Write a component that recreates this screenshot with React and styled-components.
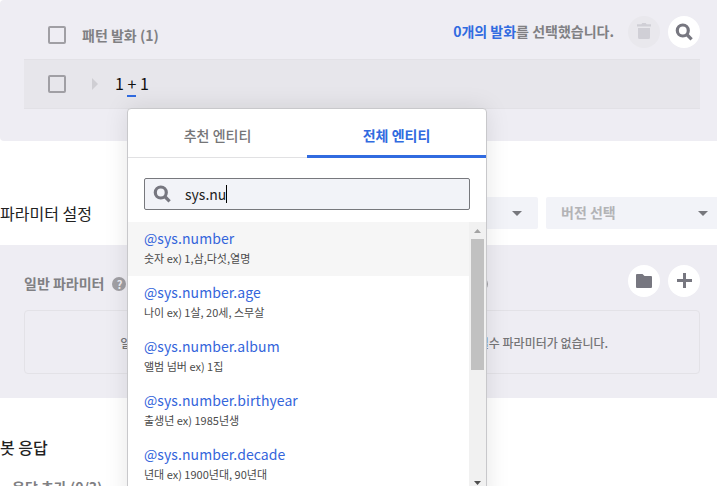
import React from "react";
import styled, { createGlobalStyle } from "styled-components";

const Global = createGlobalStyle`
  * { box-sizing: border-box; }
  body { margin: 0; background: #fff; }
  body, button, input { font-family: "Noto Sans CJK KR", "Noto Sans", sans-serif; }
  button { border: 0; padding: 0; background: none; }
`;
const Page = styled.main`
  position: relative;
  width: 717px;
  height: 486px;
  overflow: hidden;
  color: #222;
`;
const Panel = styled.section`
  height: ${(p) => p.$height}px;
  padding: 0 17px 0 24px;
  background: #eeedf3;
  border-radius: ${(p) => (p.$rounded ? "4px 0 0 4px" : 0)};
`;
const PanelHeader = styled.header`
  display: flex;
  align-items: center;
  height: 59px;
  padding: 4px 0 0 24px;
`;
const Checkbox = styled.span`
  width: 18px;
  height: 18px;
  margin-top: ${(p) => p.$drop || 0}px;
  border: 2px solid #a09fa4;
  border-radius: 2px;
`;
const PanelTitle = styled.h2`
  margin: ${(p) => p.$drop || 0}px 0 0 ${(p) => p.$indent || 0}px;
  color: #808083;
  font-size: 14px;
  font-weight: 700;
  line-height: 20px;
  white-space: nowrap;
`;
const Selection = styled.p`
  margin: -2px 14px 0 auto;
  color: #808083;
  font-size: 14px;
  font-weight: 700;
  line-height: 20px;
  b { color: #316be0; font-weight: 700; }
`;
const Actions = styled.div`
  display: flex;
  gap: 8px;
`;
const RoundButton = styled.button`
  display: grid;
  place-items: center;
  width: 32px;
  height: 32px;
  border-radius: 50%;
  background: ${(p) => (p.$muted ? "#e9e8ed" : "#fff")};
  svg { display: block; }
`;
const Utterance = styled.div`
  display: flex;
  align-items: center;
  height: 50px;
  padding-left: 24px;
  background: #e7e6eb;
  border: solid #e2e1e6;
  border-width: 1px 0;
  > svg { margin: 0 17px 0 26px; }
`;
const UtteranceText = styled.span`
  color: #111;
  font-size: 16px;
  line-height: 24px;
  white-space: pre;
`;
const Mark = styled.u`
  display: inline-block;
  height: 26px;
  border-bottom: 2px solid #316be0;
  text-decoration: none;
`;
const SectionBar = styled.div`
  display: flex;
  align-items: center;
  height: 104px;
  padding-top: 40px;
`;
const SectionTitle = styled.h1`
  margin: 0;
  font-size: 16px;
  font-weight: ${(p) => p.$weight || 400};
  line-height: 24px;
`;
const Selects = styled.div`
  display: flex;
  gap: 8px;
  margin: 0 -8px 0 auto;
`;
const Select = styled.div`
  display: flex;
  align-items: center;
  justify-content: space-between;
  width: 179px;
  height: 32px;
  padding: 0 ${(p) => (p.$placeholder ? 17 : 16)}px 0 15px;
  border-radius: 2px;
  background: #f2f3f8;
  color: #b3b3b6;
  font-size: 14px;
  font-weight: 700;
  line-height: 20px;
  span { margin-top: -2px; }
`;
const Columns = styled.div`
  display: grid;
  grid-template-columns: 323px 314px;
  justify-content: space-between;
`;
const ColumnHeader = styled.div`
  display: flex;
  align-items: center;
  height: 65px;
  padding-top: 7px;
  ${Actions} { margin-left: auto; }
`;
const Help = styled.span`
  display: grid;
  place-items: center;
  width: 14px;
  height: 14px;
  margin: 5px 0 0 8px;
  border-radius: 50%;
  background: #a09fa4;
  color: #eeedf3;
  font-size: 11px;
  font-weight: 700;
  line-height: 14px;
`;
const EmptyBox = styled.div`
  display: grid;
  place-items: center;
  height: 64px;
  border: 1px solid #e3e2e7;
  border-radius: 4px;
  color: #757577;
  font-size: 12px;
  font-weight: 500;
`;
const ReplyArea = styled.section`
  padding-top: 37px;
`;
const ReplyLabel = styled.div`
  padding: 18px 0 0 12px;
  color: #808083;
  font-size: 14px;
  font-weight: 700;
  line-height: 20px;
`;
const Popup = styled.div`
  position: absolute;
  top: 108px;
  left: 127px;
  width: 360px;
  height: 400px;
  background: #fff;
  border: 1px solid #c8c8cb;
  border-radius: 4px;
  box-shadow: 0 0 24px rgba(0, 0, 0, 0.1);
`;
const Tabs = styled.div`
  display: grid;
  grid-template-columns: 1fr 1fr;
  height: 49px;
`;
const Tab = styled.button`
  border-bottom: ${(p) => (p.$active ? "3px solid #316be0" : "1px solid #e1e1e3")};
  padding-top: ${(p) => (p.$active ? 6 : 4)}px;
  color: ${(p) => (p.$active ? "#316be0" : "#757577")};
  font-size: 14px;
  font-weight: ${(p) => (p.$active ? 700 : 500)};
  line-height: 20px;
`;
const SearchField = styled.div`
  display: flex;
  align-items: center;
  height: 32px;
  margin: 20px 16px 12px;
  padding-left: 8px;
  border: 1px solid #77787d;
  border-radius: 2px;
  background: #f2f3f8;
  font-size: 14px;
  line-height: 20px;
  svg { margin-right: 14px; }
`;
const Caret = styled.i`
  width: 1px;
  height: 18px;
  background: #000;
`;
const ListArea = styled.div`
  display: flex;
  height: 264px;
`;
const Entities = styled.ul`
  flex: 1;
  margin: 0;
  padding: 0;
  overflow: hidden;
  list-style: none;
`;
const Entity = styled.li`
  height: 54px;
  padding: 6px 16px 0;
  background: ${(p) => (p.$current ? "#f6f6f6" : "#fff")};
`;
const EntityName = styled.div`
  padding-bottom: 2px;
  color: #3465db;
  font-size: 14px;
  letter-spacing: 0.08px;
  line-height: 20px;
`;
const EntityHint = styled.div`
  color: #4a4a4a;
  font-size: 11px;
  line-height: 16px;
`;
const Scrollbar = styled.div`
  display: flex;
  flex-direction: column;
  align-items: center;
  width: 17px;
  background: #f1f1f1;
  svg { flex: none; }
`;
const Thumb = styled.div`
  width: 13px;
  height: 131px;
  margin-bottom: auto;
  background: #c1c1c1;
`;

const SearchIcon = () => (
  <svg width="18" height="18" viewBox="0 0 18 18" fill="none" stroke="#777780">
    <circle cx="7.8" cy="7.5" r="5.5" strokeWidth="3.2" />
    <path d="M11.8 11.5L16.6 16.3" strokeWidth="3.2" />
  </svg>
);
const TrashIcon = () => (
  <svg width="14" height="18" viewBox="0 0 14 18" fill="#d0cfd6">
    <path d="M0 1.2h4.5L5.2 0h3.6l.7 1.2H14v2.3H0zM1 5h12v9.5q0 1.5-1.5 1.5h-9Q1 16 1 14.5z" />
  </svg>
);
const FolderIcon = () => (
  <svg width="16" height="14" viewBox="0 0 16 14" fill="#777780">
    <path d="M1 0h5.5l2 2H15q1 0 1 1v10q0 1-1 1H1q-1 0-1-1V1q0-1 1-1z" />
  </svg>
);
const PlusIcon = () => (
  <svg width="16" height="16" viewBox="0 0 16 16" fill="#777780">
    <path d="M7 0h3v6h6v3h-6v6H7V9H1V6h6z" />
  </svg>
);
const DownIcon = () => (
  <svg width="10" height="5" viewBox="0 0 10 5" fill="#77787d">
    <path d="M0 0h10L5 5z" />
  </svg>
);
const RightIcon = () => (
  <svg width="6" height="12" viewBox="0 0 6 12" fill="#cfced3">
    <path d="M0 0v12l6-6z" />
  </svg>
);
const ScrollArrow = ({ down }) => (
  <svg width="17" height="17" viewBox="0 0 17 17" fill={down ? "#505050" : "#a3a3a3"}>
    <path d={down ? "M5 12h7l-3.5 4z" : "M5 11h7L8.5 7z"} />
  </svg>
);

const entities = [
  ["@sys.number", "숫자 ex) 1,삼,다섯,열명"],
  ["@sys.number.age", "나이 ex) 1살, 20세, 스무살"],
  ["@sys.number.album", "앨범 넘버 ex) 1집"],
  ["@sys.number.birthyear", "출생년 ex) 1985년생"],
  ["@sys.number.decade", "년대 ex) 1900년대, 90년대"],
];

export default function App() {
  return (
    <Page>
      <Global />
      <Panel $height={141} $rounded>
        <PanelHeader>
          <Checkbox $drop={7} />
          <PanelTitle $indent={16} $drop={7}>패턴 발화 (1)</PanelTitle>
          <Selection><b>0개의 발화</b>를 선택했습니다.</Selection>
          <Actions>
            <RoundButton $muted aria-label="삭제"><TrashIcon /></RoundButton>
            <RoundButton aria-label="검색"><SearchIcon /></RoundButton>
          </Actions>
        </PanelHeader>
        <Utterance>
          <Checkbox />
          <RightIcon />
          <UtteranceText>1 <Mark>+</Mark> 1</UtteranceText>
        </Utterance>
      </Panel>
      <SectionBar>
        <SectionTitle>파라미터 설정</SectionTitle>
        <Selects>
          <Select><span /><DownIcon /></Select>
          <Select $placeholder><span>버전 선택</span><DownIcon /></Select>
        </Selects>
      </SectionBar>
      <Panel $height={153}>
        <Columns>
          <div>
            <ColumnHeader>
              <PanelTitle $drop={3}>일반 파라미터</PanelTitle>
              <Help>?</Help>
            </ColumnHeader>
            <EmptyBox>일반 파라미터가 없습니다.</EmptyBox>
          </div>
          <div>
            <ColumnHeader>
              <PanelTitle $drop={3}>필수 파라미터</PanelTitle>
              <Help>?</Help>
              <Actions>
                <RoundButton aria-label="폴더"><FolderIcon /></RoundButton>
                <RoundButton aria-label="추가"><PlusIcon /></RoundButton>
              </Actions>
            </ColumnHeader>
            <EmptyBox>필수 파라미터가 없습니다.</EmptyBox>
          </div>
        </Columns>
      </Panel>
      <ReplyArea>
        <SectionTitle $weight={500}>봇 응답</SectionTitle>
        <ReplyLabel>응답 추가 (0/3)</ReplyLabel>
      </ReplyArea>
      <Popup>
        <Tabs>
          <Tab>추천 엔티티</Tab>
          <Tab $active>전체 엔티티</Tab>
        </Tabs>
        <SearchField><SearchIcon />sys.nu<Caret /></SearchField>
        <ListArea>
          <Entities>
            {entities.map(([name, hint], i) => (
              <Entity key={name} $current={i === 0}>
                <EntityName>{name}</EntityName>
                <EntityHint>{hint}</EntityHint>
              </Entity>
            ))}
          </Entities>
          <Scrollbar><ScrollArrow /><Thumb /><ScrollArrow down /></Scrollbar>
        </ListArea>
      </Popup>
    </Page>
  );
}
